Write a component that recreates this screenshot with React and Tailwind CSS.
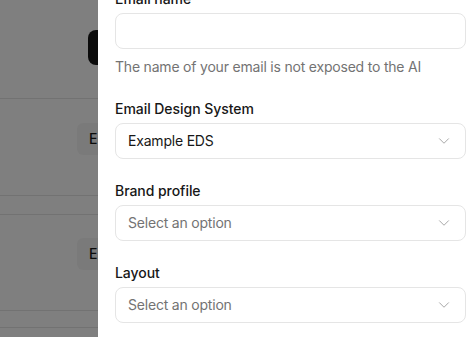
import { ChevronDown } from "lucide-react";

function Field({ label, children, hint }) {
  return (
    <div className="flex flex-col">
      <label className="mb-1 text-sm leading-5 font-medium tracking-[-0.05px] text-neutral-900">{label}</label>
      {children}
      {hint && <p className="mt-2 text-sm leading-5 tracking-[-0.2px] text-neutral-500">{hint}</p>}
    </div>
  );
}

function Select({ value, placeholder }) {
  return (
    <div className="flex h-9 items-center justify-between rounded-lg border border-neutral-200 bg-white px-3 text-sm tracking-[-0.2px]">
      <span className={value ? "text-neutral-900" : "text-neutral-500"}>{value || placeholder}</span>
      <ChevronDown size={18} strokeWidth={1.25} className="text-neutral-400" />
    </div>
  );
}

export default function App() {
  return (
    <div
      className="flex h-[337px] w-[475px] overflow-hidden bg-white"
      style={{ fontFamily: "Inter, 'Noto Sans', sans-serif" }}
    >
      {/* page behind the sheet */}
      <div className="relative w-[98px] shrink-0 overflow-hidden">
        <div className="w-[300px] text-sm text-neutral-900">
          <div className="h-[99px] border-b border-neutral-200 pt-[30px]">
            <div className="ml-[88px] h-[35px] w-[120px] rounded-lg bg-neutral-900" />
          </div>
          <div className="h-[97px] border-b border-neutral-200 pt-6">
            <div className="ml-[77px] flex h-8 w-[120px] items-center rounded-md bg-neutral-100 pl-3 font-medium">E</div>
          </div>
          <div className="h-[19px] border-b border-neutral-200" />
          <div className="h-[96px] border-b border-neutral-200 pt-[23px]">
            <div className="ml-[77px] flex h-8 w-[120px] items-center rounded-md bg-neutral-100 pl-3 font-medium">E</div>
          </div>
          <div className="h-[17px] border-b border-neutral-200" />
        </div>
        <div className="absolute inset-0 bg-black/50" />
      </div>

      {/* sheet */}
      <div className="flex-1 bg-white pl-[17px] pr-[9px]">
        <div className="-mt-[11px] flex flex-col gap-[22px]">
          <Field label="Email name" hint="The name of your email is not exposed to the AI">
            <div className="h-9 rounded-lg border border-neutral-200 bg-white" />
          </Field>
          <Field label="Email Design System">
            <Select value="Example EDS" />
          </Field>
          <Field label="Brand profile">
            <Select placeholder="Select an option" />
          </Field>
          <Field label="Layout">
            <Select placeholder="Select an option" />
          </Field>
        </div>
      </div>
    </div>
  );
}
